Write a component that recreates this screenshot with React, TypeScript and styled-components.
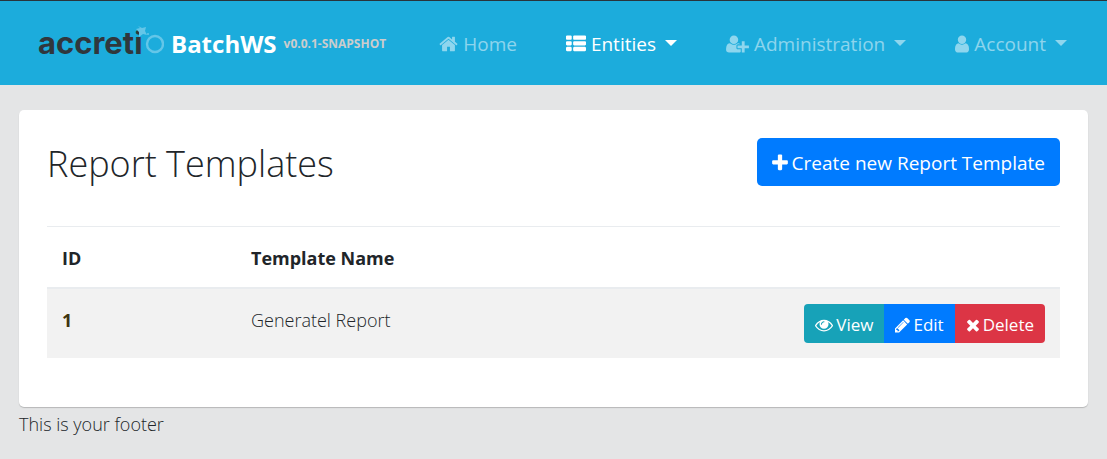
import React from "react";
import styled, { createGlobalStyle, css } from "styled-components";

const GlobalStyle = createGlobalStyle`
  *, *::before, *::after { box-sizing: border-box; }
  body {
    margin: 0;
    background: #e4e5e6;
    color: #212529;
    font-family: "Open Sans", "Noto Sans", sans-serif;
    font-size: 18px;
    font-weight: 300;
    line-height: 30px;
  }
`;

const Header = styled.header`
  display: flex;
  align-items: center;
  justify-content: space-between;
  min-height: 85px;
  padding: 2px 40px 0 36px;
  border-top: 1px solid #29343c;
  background: #1cacdc;
  white-space: nowrap;
`;

const Brand = styled.a`
  display: flex;
  align-items: center;
  gap: 7px;
  color: #fff;
  text-decoration: none;
`;

const Logo = styled.svg`
  display: block;
  width: 128px;
  height: 56px;
`;

const BrandName = styled.span`
  font-size: 24px;
  font-weight: 700;
`;

const Version = styled.span`
  color: #ccc;
  font-size: 12px;
  font-weight: 700;
`;

const Nav = styled.nav`
  display: flex;
  align-items: center;
  gap: 49px;
`;

const NavLink = styled.a<{ $active?: boolean }>`
  display: flex;
  align-items: center;
  gap: 5px;
  color: ${(p) => (p.$active ? "#fff" : "rgba(255, 255, 255, 0.5)")};
  font-size: 19px;
  font-weight: 400;
  text-decoration: none;
`;

const Caret = styled.span`
  margin: 0 0 2px 4px;
  border: 6px solid transparent;
  border-top-color: currentColor;
  border-bottom: 0;
`;

const Glyph = styled.svg`
  display: block;
  flex: none;
  fill: currentColor;
`;

const Page = styled.div`
  padding: 25px 19px 20px;
`;

const Card = styled.main`
  padding: 28px 28px 49px;
  border-radius: 5px;
  background: #fff;
  box-shadow: 0 1px 1px rgba(0, 0, 0, 0.2);
`;

const CardHead = styled.div`
  display: flex;
  align-items: center;
  justify-content: space-between;
  margin-bottom: 40px;
`;

const Title = styled.h2`
  margin: 0;
  padding-top: 4px;
  font-size: 36px;
  font-weight: 300;
  line-height: 44px;
`;

const buttonBase = css`
  display: inline-flex;
  align-items: center;
  border: 0;
  color: #fff;
  font-family: inherit;
  font-weight: 400;
  white-space: nowrap;
  cursor: pointer;
`;

const CreateButton = styled.button`
  ${buttonBase}
  gap: 4px;
  height: 48px;
  padding: 2px 15px 0;
  border-radius: 5px;
  background: #007bff;
  font-size: 19px;
`;

const Table = styled.table`
  width: 100%;
  border-spacing: 0;
  text-align: left;
`;

const HeadCell = styled.th<{ $width?: string }>`
  width: ${(p) => p.$width ?? "auto"};
  padding: 16px 15px 14px;
  border-top: 1px solid #e9ecef;
  border-bottom: 2px solid #e9ecef;
  font-weight: 700;
`;

const Cell = styled.td`
  padding: 16px 15px 14px;
  background: #f2f2f2;
  vertical-align: top;
`;

const IdCell = styled(Cell)`
  color: #3e3410;
  font-weight: 700;
`;

const ActionsCell = styled(Cell)`
  padding: 15px;
`;

const ButtonGroup = styled.div`
  display: flex;
  justify-content: flex-end;
`;

const ActionButton = styled.button<{ $color: string }>`
  ${buttonBase}
  gap: 3px;
  height: 39px;
  padding: 2px 11px 0;
  background: ${(p) => p.$color};
  font-size: 17px;

  &:first-child { border-radius: 4px 0 0 4px; }
  &:last-child { border-radius: 0 4px 4px 0; }
`;

const Footer = styled.footer`
  padding-top: 2px;
`;

type IconShape = { x: number; width: number; d: string };

const icons: Record<string, IconShape> = {
  home: {
    x: 64,
    width: 1664,
    d: "M1472 992v480q0 26-19 45t-45 19h-384v-384h-256v384h-384q-26 0-45-19t-19-45v-480q0-1 .5-3t.5-3l575-474 575 474q1 2 1 6zm223-69l-62 74q-8 9-21 11h-3q-13 0-21-7l-692-577-692 577q-12 8-24 7-13-2-21-11l-62-74q-8-10-7-23.5t11-21.5l719-599q32-26 76-26t76 26l244 204v-195q0-14 9-23t23-9h192q14 0 23 9t9 23v408l219 182q10 8 11 21.5t-7 23.5z",
  },
  list: {
    x: 0,
    width: 1792,
    d: "M512 1248v192q0 40-28 68t-68 28h-320q-40 0-68-28t-28-68v-192q0-40 28-68t68-28h320q40 0 68 28t28 68zm0-512v192q0 40-28 68t-68 28h-320q-40 0-68-28t-28-68v-192q0-40 28-68t68-28h320q40 0 68 28t28 68zm1280 512v192q0 40-28 68t-68 28h-960q-40 0-68-28t-28-68v-192q0-40 28-68t68-28h960q40 0 68 28t28 68zm-1280-1024v192q0 40-28 68t-68 28h-320q-40 0-68-28t-28-68v-192q0-40 28-68t68-28h320q40 0 68 28t28 68zm1280 512v192q0 40-28 68t-68 28h-960q-40 0-68-28t-28-68v-192q0-40 28-68t68-28h960q40 0 68 28t28 68zm0-512v192q0 40-28 68t-68 28h-960q-40 0-68-28t-28-68v-192q0-40 28-68t68-28h960q40 0 68 28t28 68z",
  },
  userPlus: {
    x: 0,
    width: 2048,
    d: "M704 896q-159 0-271.5-112.5t-112.5-271.5 112.5-271.5 271.5-112.5 271.5 112.5 112.5 271.5-112.5 271.5-271.5 112.5zm960 128h352q13 0 22.5 9.5t9.5 22.5v192q0 13-9.5 22.5t-22.5 9.5h-352v352q0 13-9.5 22.5t-22.5 9.5h-192q-13 0-22.5-9.5t-9.5-22.5v-352h-352q-13 0-22.5-9.5t-9.5-22.5v-192q0-13 9.5-22.5t22.5-9.5h352v-352q0-13 9.5-22.5t22.5-9.5h192q13 0 22.5 9.5t9.5 22.5v352zm-736 224q0 52 38 90t90 38h256v238q-68 50-171 50h-874q-121 0-194-69t-73-190q0-53 3.5-103.5t14-109 26.5-108.5 43-97.5 62-81 85.5-53.5 111.5-20q19 0 39 17 79 61 154.5 91.5t164.5 30.5 164.5-30.5 154.5-91.5q20-17 39-17 132 0 217 96h-223q-52 0-90 38t-38 90v192z",
  },
  user: {
    x: 256,
    width: 1280,
    d: "M1536 1399q0 109-62.5 187t-150.5 78h-854q-88 0-150.5-78t-62.5-187q0-85 8.5-160.5t31.5-152 58.5-131 94-89 134.5-34.5q131 128 313 128t313-128q76 0 134.5 34.5t94 89 58.5 131 31.5 152 8.5 160.5zm-256-887q0 159-112.5 271.5t-271.5 112.5-271.5-112.5-112.5-271.5 112.5-271.5 271.5-112.5 271.5 112.5 112.5 271.5z",
  },
  plus: {
    x: 192,
    width: 1408,
    d: "M1600 736v192q0 40-28 68t-68 28h-416v416q0 40-28 68t-68 28h-192q-40 0-68-28t-28-68v-416h-416q-40 0-68-28t-28-68v-192q0-40 28-68t68-28h416v-416q0-40 28-68t68-28h192q40 0 68 28t28 68v416h416q40 0 68 28t28 68z",
  },
  eye: {
    x: 0,
    width: 1792,
    d: "M1664 960q-152-236-381-353 61 104 61 225 0 185-131.5 316.5t-316.5 131.5-316.5-131.5-131.5-316.5q0-121 61-225-229 117-381 353 133 205 333.5 326.5t434.5 121.5 434.5-121.5 333.5-326.5zm-720-384q0-20-14-34t-34-14q-125 0-214.5 89.5t-89.5 214.5q0 20 14 34t34 14 34-14 14-34q0-86 61-147t147-61q20 0 34-14t14-34zm848 384q0 34-20 69-140 230-376.5 368.5t-499.5 138.5-499.5-139-376.5-368q-20-35-20-69t20-69q140-229 376.5-368t499.5-139 499.5 139 376.5 368q20 35 20 69z",
  },
  pencil: {
    x: 128,
    width: 1536,
    d: "M491 1536l91-91-235-235-91 91v107h128v128h107zm523-928q0-22-22-22-10 0-17 7l-542 542q-7 7-7 17 0 22 22 22 10 0 17-7l542-542q7-7 7-17zm-54-192l416 416-832 832h-416v-416zm683 96q0 53-37 90l-166 166-416-416 166-165q36-38 90-38 53 0 91 38l235 234q37 39 37 91z",
  },
  times: {
    x: 192,
    width: 1408,
    d: "M1490 1322q0 40-28 68l-136 136q-28 28-68 28t-68-28l-294-294-294 294q-28 28-68 28t-68-28l-136-136q-28-28-28-68t28-68l294-294-294-294q-28-28-28-68t28-68l136-136q28-28 68-28t68 28l294 294 294-294q28-28 68-28t68 28l136 136q28 28 28 68t-28 68l-294 294 294 294q28 28 28 68z",
  },
};

function Icon({ name, size = 20 }: { name: string; size?: number }) {
  const { x, width, d } = icons[name];
  return (
    <Glyph
      width={Math.round((width / 1792) * size)}
      height={size}
      viewBox={`${x} 0 ${width} 1792`}
      aria-hidden="true"
    >
      <path d={d} />
    </Glyph>
  );
}

const navItems = [
  { label: "Home", icon: "home" },
  { label: "Entities", icon: "list", active: true, menu: true },
  { label: "Administration", icon: "userPlus", menu: true },
  { label: "Account", icon: "user", menu: true },
];

const actions = [
  { label: "View", icon: "eye", color: "#17a2b8" },
  { label: "Edit", icon: "pencil", color: "#007bff" },
  { label: "Delete", icon: "times", color: "#dc3545" },
];

const templates = [{ id: 1, name: "Generatel Report" }];

export default function App() {
  return (
    <>
      <GlobalStyle />
      <Header>
        <Brand href="#">
          <Logo viewBox="0 0 128 56">
            <text x="2" y="38" fill="#30373c" fontFamily="Inter, sans-serif" fontSize="31" fontWeight="700">
              accreti
            </text>
            <circle cx="119" cy="28" r="8" fill="none" stroke="#64c6e8" strokeWidth="2.4" />
            <path d="M102 10l4 2 4-1-1 4 2 4-4-1-4 3v-5l-3-3 4-1z" fill="#64c6e8" />
            <circle cx="112" cy="18" r="1" fill="#64c6e8" />
          </Logo>
          <BrandName>BatchWS</BrandName>
          <Version>v0.0.1-SNAPSHOT</Version>
        </Brand>
        <Nav>
          {navItems.map((item) => (
            <NavLink key={item.label} href="#" $active={item.active}>
              <Icon name={item.icon} />
              {item.label}
              {item.menu && <Caret />}
            </NavLink>
          ))}
        </Nav>
      </Header>
      <Page>
        <Card>
          <CardHead>
            <Title>Report Templates</Title>
            <CreateButton type="button">
              <Icon name="plus" />
              Create new Report Template
            </CreateButton>
          </CardHead>
          <Table>
            <thead>
              <tr>
                <HeadCell scope="col" $width="189px">ID</HeadCell>
                <HeadCell scope="col">Template Name</HeadCell>
                <HeadCell aria-label="Actions" />
              </tr>
            </thead>
            <tbody>
              {templates.map((t) => (
                <tr key={t.id}>
                  <IdCell>{t.id}</IdCell>
                  <Cell>{t.name}</Cell>
                  <ActionsCell>
                    <ButtonGroup>
                      {actions.map((a) => (
                        <ActionButton key={a.label} type="button" $color={a.color}>
                          <Icon name={a.icon} size={18} />
                          {a.label}
                        </ActionButton>
                      ))}
                    </ButtonGroup>
                  </ActionsCell>
                </tr>
              ))}
            </tbody>
          </Table>
        </Card>
        <Footer>This is your footer</Footer>
      </Page>
    </>
  );
}
